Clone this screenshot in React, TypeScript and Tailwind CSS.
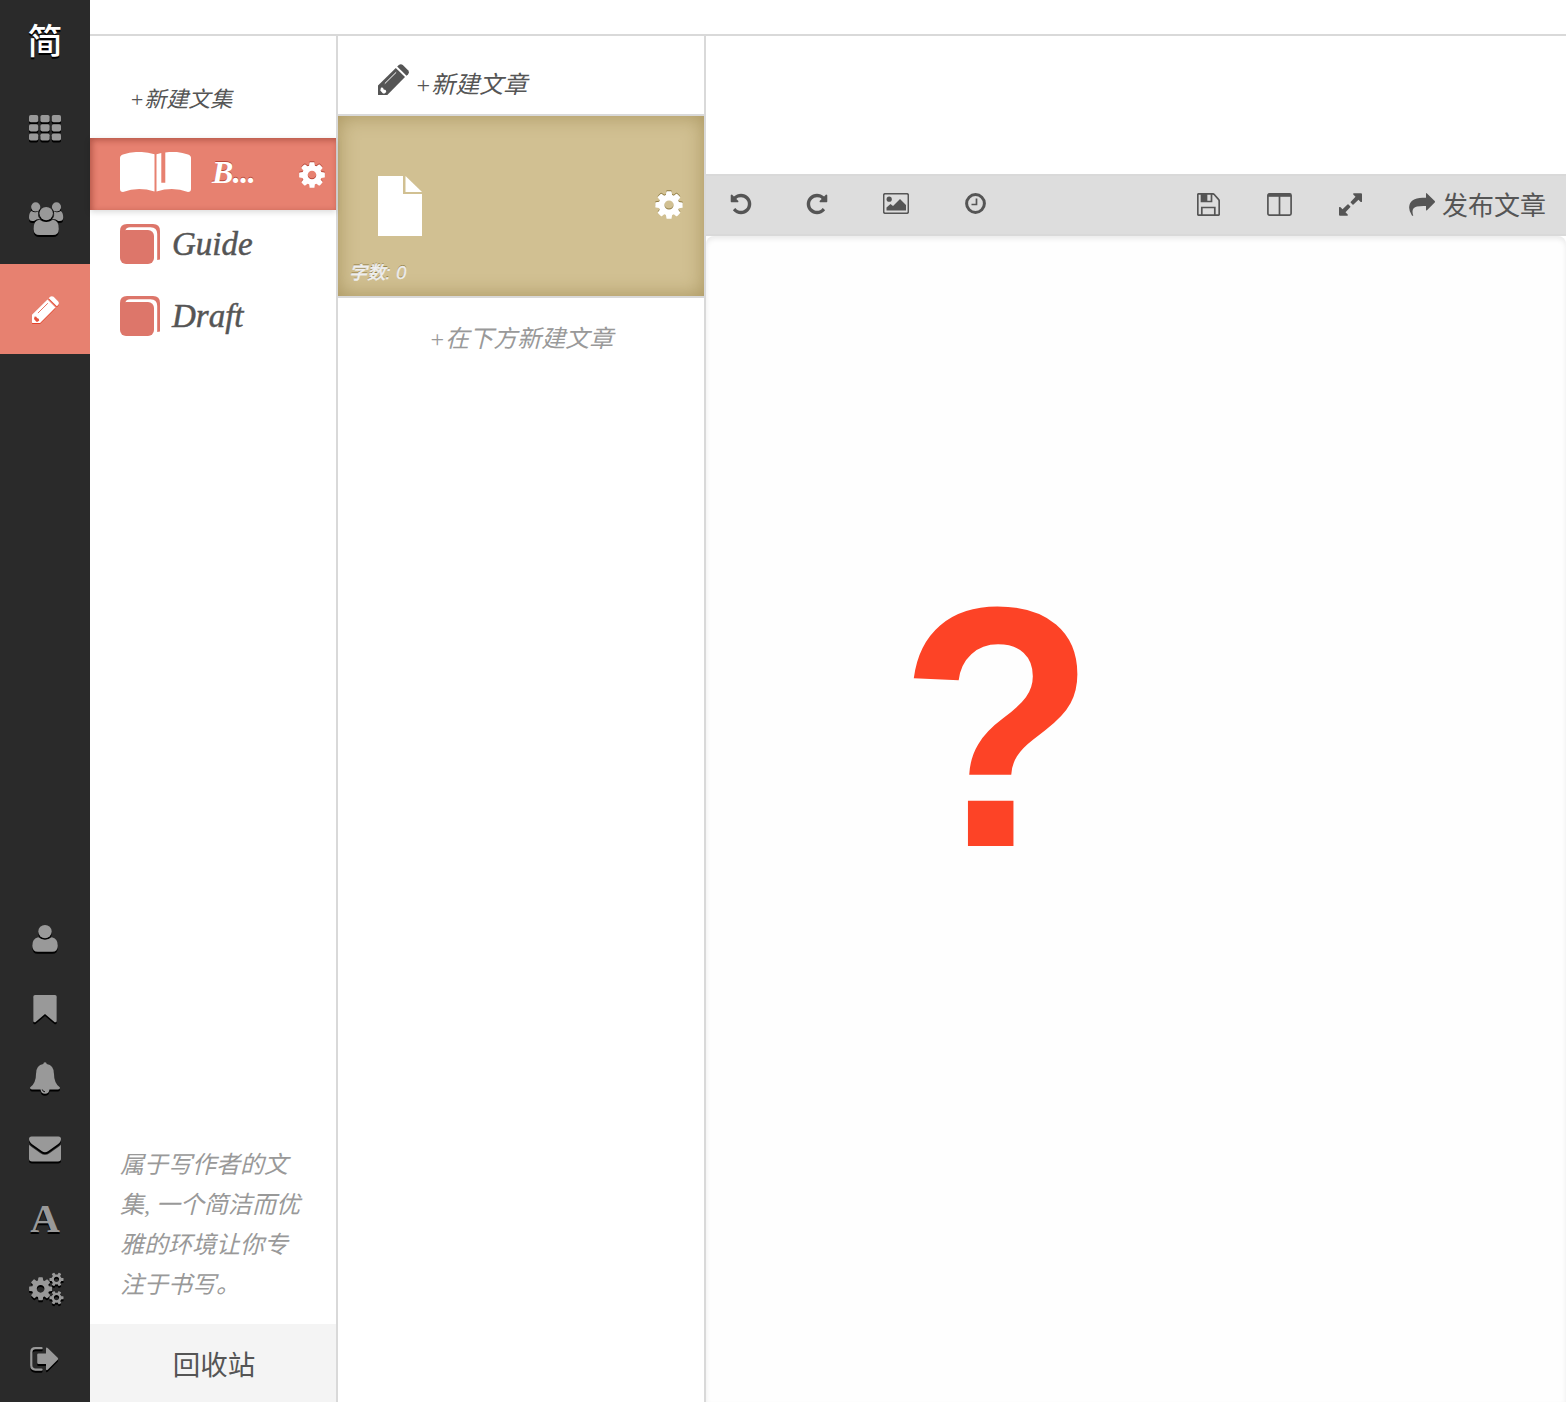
import React from 'react';

const serif = "font-['Liberation_Serif','Noto_Sans_CJK_SC',serif]";

const COG =
  'M1152 896q0-106-75-181t-181-75-181 75-75 181 75 181 181 75 181-75 75-181zm512-109v222q0 12-8 23t-20 13l-185 28q-19 54-39 91 35 50 107 138 10 12 10 25t-9 23q-27 37-99 108t-94 71q-12 0-26-9l-138-108q-44 23-91 38-16 136-29 186-7 28-36 28h-222q-14 0-24.5-8.5t-11.5-21.5l-28-184q-49-16-90-37l-141 107q-10 9-25 9-14 0-25-11-126-114-165-168-7-10-7-23 0-12 8-23 15-21 51-66.5t54-70.5q-27-50-41-99l-183-27q-13-2-21-12.5t-8-23.5v-222q0-12 8-23t19-13l186-28q14-46 39-92-40-57-107-138-10-12-10-24 0-10 9-23 26-36 98.5-107.5t94.5-71.5q13 0 26 10l138 107q44-23 91-38 16-136 29-186 7-28 36-28h222q14 0 24.500 8.500t11.500 21.500l28 184q49 16 90 37l142-107q9-9 24-9 13 0 25 10 129 119 165 170 7 8 7 22 0 12-8 23-15 21-51 66.5t-54 70.5q26 50 41 98l183 28q13 2 21 12.5t8 23.5z';
const UNDO =
  'M1664 896q0 156-61 298t-164 245-245 164-298 61q-172 0-327-72.5t-264-204.5q-7-10-6.5-22.5t8.5-20.5l137-138q10-9 25-9 16 2 23 12 73 95 179 147t225 52q104 0 198.5-40.5t163.5-109.5 109.5-163.5 40.5-198.5-40.5-198.5-109.5-163.5-163.5-109.5-198.5-40.5q-98 0-188 35.5t-160 101.5l137 138q31 30 14 69-17 40-59 40h-448q-26 0-45-19t-19-45v-448q0-42 40-59 39-17 69 14l130 129q107-101 244.5-156.5t284.5-55.5q156 0 298 61t245 164 164 245 61 298z';

function Glyph({ d, className }: { d: string; className: string }) {
  return (
    <svg viewBox="0 0 1792 1792" className={className} fill="currentColor">
      <path d={d} />
    </svg>
  );
}

function Pencil({ className, groove, tip }: { className: string; groove: string; tip: string }) {
  return (
    <svg viewBox="0 0 31 31" className={className} fill="currentColor">
      <path d="M0 21.500L17.800 3.900l9.200 9.200L9.300 31H.5Q0 31 0 30.500z" />
      <path d="M19.200 2.500l1.600-1.600q2-1.500 4 0l5.300 5.300q1.500 2 0 4l-1.600 1.600z" />
      <path d="M6.800 19.600L18.200 8.300" fill="none" stroke={groove} strokeWidth="1" />
      <path d="M3 23.500l2 .3.700 1.600 2 .6.600 2-1.800 1.500H5L2.300 26.500z" fill={tip} />
    </svg>
  );
}

function SideIcon({ children }: { children: React.ReactNode }) {
  return (
    <svg viewBox="0 0 40 40" className="size-10 overflow-visible drop-shadow-[0_2px_0_#000]" fill="currentColor">
      {children}
    </svg>
  );
}

function SmallCog({ x, y }: { x: number; y: number }) {
  return (
    <g transform={`translate(${x} ${y})`}>
      <circle r="3.8" fill="none" stroke="currentColor" strokeWidth="2.4" />
      {[0, 60, 120, 180, 240, 300].map((a) => (
        <rect key={a} x="-1.5" y="-7" width="3" height="3" rx="0.5" transform={`rotate(${a + 30})`} />
      ))}
    </g>
  );
}

function SideCell({ children, tall, active }: { children: React.ReactNode; tall?: boolean; active?: boolean }) {
  return (
    <div
      className={
        'flex w-full shrink-0 items-center justify-center ' +
        (tall ? 'h-[90px] ' : 'h-[70px] ') +
        (active ? 'bg-[#e78170] text-white' : 'text-[#999]')
      }
    >
      {children}
    </div>
  );
}

function Sidebar() {
  return (
    <nav className="flex w-[90px] shrink-0 flex-col bg-[#2a2a2a]">
      <div className="flex h-[84px] shrink-0 items-start justify-center pt-[21px] font-['Noto_Sans_CJK_SC',sans-serif] text-[35px] leading-[36px] font-medium text-white [text-shadow:0_2px_0_#000]">
        简
      </div>
      <SideCell tall>
        <SideIcon>
          {[6, 15.2, 24.4].map((y) =>
            [4, 15.4, 26.8].map((x) => <rect key={`${x}-${y}`} x={x} y={y} width="9.2" height="7.2" rx="1.8" />),
          )}
        </SideIcon>
      </SideCell>
      <SideCell tall>
        <SideIcon>
          <circle cx="10.7" cy="7.9" r="4.6" />
          <circle cx="31.5" cy="7.9" r="4.6" />
          <path d="M6.500 12q4 2.500 7 0Q12 17 15 20q-4 0-6 2H7.500q-3.500 0-3.500-3.500 0-5 2.500-6.500zM35.700 12q-4 2.500-7 0Q30.200 17 27.200 20q4 0 6 2h1.500q3.500 0 3.500-3.500 0-5-2.500-6.500z" />
          <circle cx="21.200" cy="14.600" r="6.700" />
          <path d="M14.500 20.800q6.700 4.600 13.400 0 5.900.2 5.900 9.200 0 6-5.900 6H14.500q-5.900 0-5.900-6 0-9 5.900-9.200z" />
        </SideIcon>
      </SideCell>
      <SideCell tall active>
        <Pencil className="size-[27px] drop-shadow-[0_1.5px_0_#e5432b]" groove="#e5604a" tip="#e5533c" />
      </SideCell>
      <div className="flex-1" />
      <SideCell>
        <SideIcon>
          <circle cx="20" cy="12.600" r="6.700" />
          <path d="M13.200 18.300q6.800 4.800 13.600 0 6 1 6 8.500 0 6-5.500 6H12.800q-5.500 0-5.500-6 0-7.500 5.900-8.500z" />
        </SideIcon>
      </SideCell>
      <SideCell>
        <SideIcon>
          <path d="M10 6h20q1.700 0 1.700 1.700v24q0 2-2 1.500L20 25l-9.700 8.200q-2 .5-2-1.500v-24Q8.300 6 10 6z" />
        </SideIcon>
      </SideCell>
      <SideCell>
        <SideIcon>
          <path d="M18.300 5q0-1.800 1.700-1.800T21.700 5q7.300 1.200 7.300 10 0 9.500 6 13.500 0 2-2 2h-8.500q-.5 4.200-4.500 4.200t-4.500-4.200H7q-2 0-2-2 6-4 6-13.500 0-8.800 7.300-10z" />
          <path d="M17.300 30.500q.5 2.300 2.700 2.300" fill="none" stroke="#111" strokeWidth="1" />
        </SideIcon>
      </SideCell>
      <SideCell>
        <SideIcon>
          <path d="M6.500 7.500h27Q36 7.500 36 10q0 3-3.500 5.500L23 22.300q-3 2-6 0l-9.500-6.800Q4 13 4 10q0-2.500 2.500-2.500z" />
          <path d="M4 15.800q1 1 11.500 8.500 4.500 3 9 0Q35 16.800 36 15.800v14q0 2.700-3 2.700H7q-3 0-3-2.700z" />
        </SideIcon>
      </SideCell>
      <SideCell>
        <span className="pb-0.5 font-['Liberation_Serif',serif] text-[41px] leading-[40px] font-bold [text-shadow:0_2px_0_#000]">A</span>
      </SideCell>
      <SideCell>
        <SideIcon>
          <svg x="2.200" y="6.400" width="26.800" height="26.800" viewBox="0 0 1792 1792">
            <path d={COG} />
          </svg>
          <SmallCog x={31.500} y={10.400} />
          <SmallCog x={31.500} y={28.700} />
        </SideIcon>
      </SideCell>
      <SideCell>
        <SideIcon>
          <path d="M16.500 9.200h-6q-4.200 0-4.200 4.300v12.800q0 4.300 4.200 4.300h6" fill="none" stroke="currentColor" strokeWidth="2.300" strokeLinecap="round" />
          <path d="M13.500 14.500h7.500V9.800q0-2 1.700-.8l10 9.800q1 1 0 2l-10 9.900q-1.700 1.200-1.700-.8V25h-7.500q-1.300 0-1.300-1.300v-7.900q0-1.300 1.300-1.300z" />
        </SideIcon>
      </SideCell>
      <div className="h-2 shrink-0" />
    </nav>
  );
}

function Book() {
  return (
    <svg viewBox="0 0 40 40" className="-mt-1 size-10 shrink-0" fill="#dd766a">
      <rect x="0" y="6" width="34" height="34" rx="6" />
      <path d="M0 14V7q0-7 7-7h26q7 0 7 7v28.500l-2.800.5V10q0-6.800-6.700-6.800H10Q6.500 3.200 5.500 6z" />
    </svg>
  );
}

function Notebooks() {
  return (
    <section className="flex w-[248px] shrink-0 flex-col border-r-2 border-[#d9d9d9]">
      <div className={`h-[102px] shrink-0 pt-[51px] pl-[39.5px] text-[22px] leading-[26px] text-[#555] italic ${serif}`}>+新建文集</div>
      <div className="z-10 flex h-[72px] shrink-0 items-center bg-[#e78170] pl-[30px] shadow-[0_2px_6px_rgba(0,0,0,0.15),inset_2px_2px_6px_rgba(100,20,10,0.4)]">
        <svg viewBox="0 0 71 40" className="-mt-1 h-10 w-[71px] shrink-0" fill="#fff">
          <path d="M3 2.500Q18-2.500 34.500 2.200V39.500Q18 34.500 3 40 0 40 0 37V6Q0 3.500 3 2.500z" />
          <path d="M36.500 2.200l4.800-1.200v29.700h4V.5Q57-1.500 68 2.500q3 1 3 3.500v31q0 3-3 3-15-5.500-31.500-.5z" />
        </svg>
        <span className="-mt-[5px] ml-[21px] w-[85px] font-['Liberation_Serif',serif] text-[32px] leading-[40px] font-bold tracking-[-0.5px] text-white italic [text-shadow:0_-1px_0_#b8483a]">
          B...
        </span>
        <Glyph d={COG} className="mt-0.5 size-[30px] shrink-0 text-white drop-shadow-[0_-1px_0_#b8483a]" />
      </div>
      {['Guide', 'Draft'].map((name) => (
        <div key={name} className="flex h-[72px] shrink-0 items-center pl-[30px]">
          <Book />
          <span className="-mt-1 ml-3 font-['Liberation_Serif',serif] text-[33px] leading-[40px] text-[#555] italic [-webkit-text-stroke:0.5px_#555]">
            {name}
          </span>
        </div>
      ))}
      <div className="flex-1" />
      <p className={`relative top-px w-[216px] pl-[30px] text-[24px] leading-[40px] text-[#999] italic ${serif}`}>
        属于写作者的文
        <br />
        集, 一个简洁而优
        <br />
        雅的环境让你专
        <br />
        注于书写。
      </p>
      <div className={`mt-5 flex h-[78px] shrink-0 items-center justify-center bg-[#f4f4f4] pt-1.5 pl-0.5 text-[27.5px] text-[#555] ${serif}`}>
        回收站
      </div>
    </section>
  );
}

function Notes() {
  return (
    <section className="flex w-[368px] shrink-0 flex-col border-r-2 border-[#d9d9d9]">
      <div className="flex h-20 shrink-0 border-b-2 border-[#d9d9d9] pl-[40px] text-[#555]">
        <Pencil className="mt-7 size-[31px]" groove="#fff" tip="#fff" />
        <span className={`mt-[34px] ml-1.5 text-[24px] leading-[30px] italic ${serif}`}>+新建文章</span>
      </div>
      <div className="relative flex h-[182px] shrink-0 items-center border-b-2 border-[#d9d9d9] bg-[#d1c092] pl-10 shadow-[inset_0_0_20px_rgba(110,85,20,0.4)]">
        <svg viewBox="0 0 44 60" className="h-[60px] w-11" fill="#fff">
          <path d="M0 0h25v18h19v42H0z" />
          <path d="M27.500 0L44 16H27.500z" />
        </svg>
        <Glyph d={COG} className="-mt-[3px] ml-[231px] size-8 text-white drop-shadow-[0_-1px_0_#907c42]" />
        <span className="absolute bottom-[11px] left-[11px] font-['Liberation_Sans','Noto_Sans_CJK_SC',sans-serif] text-[18px] leading-[24px] font-medium tracking-[0.3px] text-[#eee] italic [-webkit-text-stroke:0.4px_#eee] [text-shadow:0_-1px_0_#907c42]">
          字数: 0
        </span>
      </div>
      <div className={`pt-[26px] pl-[91px] text-[24px] leading-[30px] text-[#999] italic ${serif}`}>+在下方新建文章</div>
    </section>
  );
}

function Toolbar() {
  return (
    <div className="flex h-[62px] shrink-0 items-center border-y-2 border-[#d9d9d9] bg-[#ddd] pb-[3px] text-[#555]">
      <Glyph d={UNDO} className="ml-[23px] size-6" />
      <Glyph d={UNDO} className="ml-[52px] size-6 -scale-x-100" />
      <svg viewBox="0 0 26 21" className="ml-[54px] h-[21px] w-[26px]" fill="currentColor">
        <rect x="0.700" y="0.700" width="24.600" height="19.600" rx="1.500" fill="none" stroke="currentColor" strokeWidth="1.500" />
        <circle cx="6.200" cy="6.200" r="2.600" />
        <path d="M3.500 17.500v-3l4-3.500 2.500 2 7-7 6 6v5.500z" />
      </svg>
      <svg viewBox="0 0 21 21" className="ml-[55.5px] size-[21px]" fill="none" stroke="currentColor">
        <circle cx="10.500" cy="10.500" r="8.900" strokeWidth="3" />
        <path d="M11.500 5.500v6h-5" strokeWidth="1.700" />
      </svg>
      <div className="flex-1" />
      <div className="flex h-full items-center pt-0.5">
        <svg viewBox="0 0 23 23" className="size-[23px]" fill="none" stroke="currentColor" strokeWidth="1.700">
          <path d="M1.700.8h13.800q1 0 1.500.5l4.500 5q.7.700.7 1.700v13.200q0 1-1 1H1.800q-1 0-1-1V1.800q0-1 .9-1z" />
          <path d="M4.800 22v-7.500h13V22M4.500 1v7.500h10V1" />
          <path d="M5 1h4.500v7H5z" fill="currentColor" />
        </svg>
        <svg viewBox="0 0 25 23" className="ml-[47px] h-[23px] w-[25px]" fill="none" stroke="currentColor" strokeWidth="1.700">
          <rect x="0.900" y="0.900" width="23.200" height="21.200" rx="1.500" />
          <path d="M12.500 2v20" />
          <path d="M1 2.300h23" strokeWidth="3" />
        </svg>
        <svg viewBox="0 0 23 23" className="ml-[47px] size-[23px]" fill="currentColor">
          <path d="M14.500.2H22q1 0 1 1v7.500q-.8.800-1.600 0l-1.900-1.900-5 4.600q-.5.500-1 0l-1.700-1.700q-.5-.5 0-1l4.700-4.900-2-2q-.8-.8 0-1.600zM8.500 22.800H1q-1 0-1-1v-7.500q.8-.8 1.600 0l1.900 1.900 5-4.600q.5-.5 1 0l1.700 1.700q.5.500 0 1l-4.700 4.900 2 2q.8.800 0 1.600z" />
        </svg>
        <svg viewBox="0 0 26 23" className="ml-[47px] h-[23px] w-[26px]" fill="currentColor">
          <path d="M17 .8q0-1.200 1-.4l7.700 7.700q.7.700 0 1.400L18 17.200q-1 .8-1-.4V13q-5-.3-9 .5-4.500 1-4.500 5 0 2 .8 4-1 .8-1.500-.3Q-.2 18 .2 13.800.8 5 13.500 4.700H17z" />
        </svg>
        <span className={`mr-5 ml-[7px] pt-[5px] text-[26px] leading-[40px] ${serif}`}>发布文章</span>
      </div>
    </div>
  );
}

export default function App() {
  return (
    <div className="flex h-[1402px] w-[1566px] overflow-hidden bg-white">
      <Sidebar />
      <div className="flex min-w-0 flex-1 flex-col">
        <div className="h-9 shrink-0 border-b-2 border-[#d9d9d9]" />
        <div className="flex min-h-0 flex-1">
          <Notebooks />
          <Notes />
          <main className="flex min-w-0 flex-1 flex-col">
            <div className="h-[138px] shrink-0" />
            <Toolbar />
            <div className="flex-1 rounded-t-lg bg-[#fefefe] pt-[320px] pl-[193px] shadow-[inset_0_3px_5px_rgba(0,0,0,0.08)]">
              <span className="inline-block origin-top-left scale-x-[0.94] font-['Liberation_Sans',sans-serif] text-[343px] leading-[343px] font-bold text-[#fd4326]">
                ?
              </span>
            </div>
          </main>
        </div>
      </div>
    </div>
  );
}
